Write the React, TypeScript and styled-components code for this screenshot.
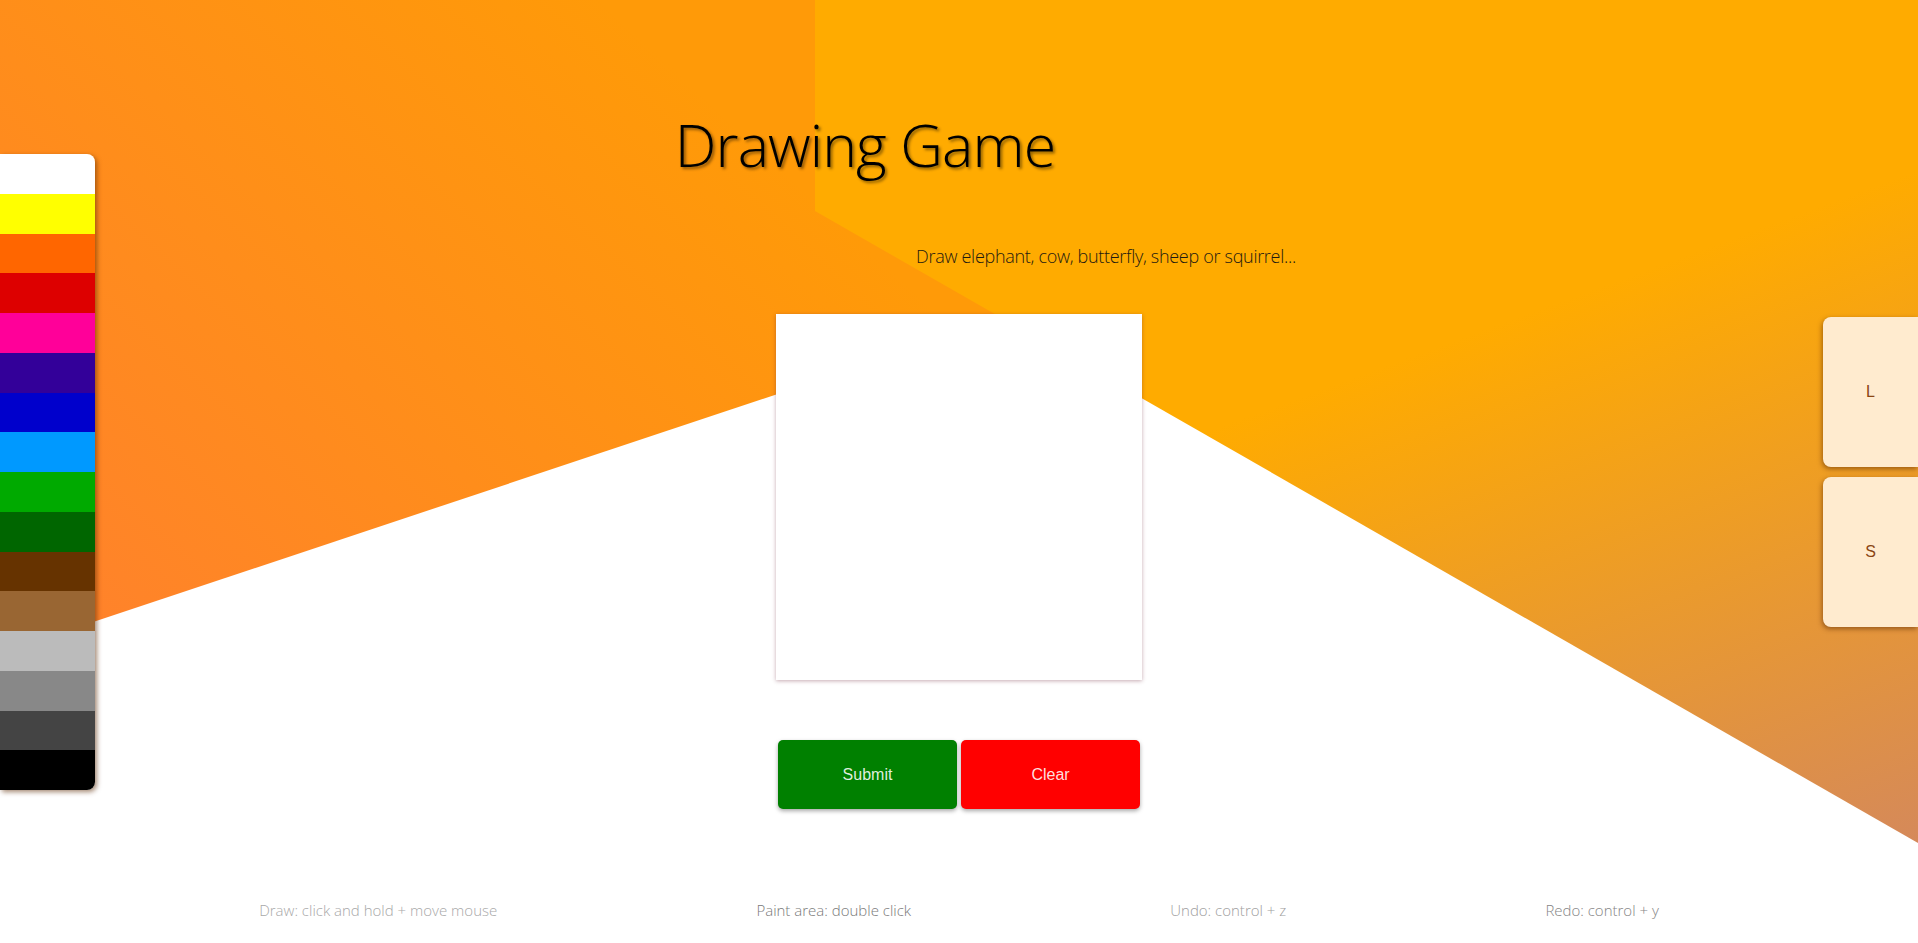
import React from "react";
import styled, { createGlobalStyle } from "styled-components";

const Global = createGlobalStyle`
  html, body { margin: 0; padding: 0; background: #ffffff; }
  body { font-family: "Open Sans", "Noto Sans", sans-serif; overflow: hidden; }
  * { box-sizing: border-box; }
`;

const Page = styled.div`
  position: relative;
  width: 100%;
  height: 943px;
  overflow: hidden;
  display: flex;
  flex-direction: column;
`;

const Backdrop = styled.svg`
  position: absolute;
  inset: 0;
  width: 100%;
  height: 100%;
  z-index: 0;
`;

const Main = styled.div`
  position: relative;
  z-index: 1;
  display: grid;
  grid-template-columns: 95px 1fr 95px;
  align-items: start;
`;

const Palette = styled.ul`
  list-style: none;
  margin: 154px 0 0 0;
  padding: 0;
  width: 95px;
  display: flex;
  flex-direction: column;
  border-radius: 0 8px 8px 0;
  overflow: hidden;
  box-shadow: 2px 2px 5px rgba(90, 40, 0, 0.55);
`;

const Swatch = styled.li<{ $color: string }>`
  height: 39.75px;
  background: ${(p) => p.$color};
  cursor: pointer;
`;

const Center = styled.div`
  display: flex;
  flex-direction: column;
  align-items: center;
  padding-top: 108px;
`;

const Title = styled.h1`
  margin: 0 188px 0 0;
  font-family: "Open Sans", "Noto Sans", sans-serif;
  font-weight: 300;
  font-size: 59px;
  letter-spacing: -0.9px;
  line-height: 72px;
  color: #000;
  text-shadow: 2px 2px 3px rgba(0, 0, 0, 0.45);
  white-space: nowrap;
`;

const Subtitle = styled.p`
  margin: 64px 0 0 294px;
  font-family: "Open Sans", "Noto Sans", sans-serif;
  font-weight: 300;
  font-size: 18px;
  letter-spacing: -0.3px;
  line-height: 24px;
  color: #1e1a10;
  white-space: nowrap;
`;

const Canvas = styled.div`
  margin-top: 46px;
  width: 366px;
  height: 366px;
  background: #ffffff;
  box-shadow: 0 1px 4px rgba(110, 40, 60, 0.4);
`;

const ButtonRow = styled.div`
  margin-top: 60px;
  display: flex;
  gap: 4px;
`;

const ActionButton = styled.button<{ $bg: string }>`
  width: 179px;
  height: 69px;
  border: none;
  border-radius: 5px;
  background: ${(p) => p.$bg};
  color: rgba(255, 255, 255, 0.88);
  font-family: "Liberation Sans", Arial, sans-serif;
  font-size: 16px;
  box-shadow: 0 2px 4px rgba(0, 0, 0, 0.35);
  cursor: pointer;
`;

const SideColumn = styled.div`
  margin-top: 317px;
  display: flex;
  flex-direction: column;
  gap: 10px;
`;

const SideButton = styled.button`
  width: 95px;
  height: 150px;
  border: none;
  border-radius: 8px 0 0 8px;
  background: #ffebcf;
  color: #8b4513;
  font-family: "Liberation Sans", Arial, sans-serif;
  font-size: 16px;
  box-shadow: -1px 2px 5px rgba(90, 40, 0, 0.55);
  cursor: pointer;
`;

const Footer = styled.footer`
  position: relative;
  z-index: 1;
  margin-top: 90px;
  display: flex;
  justify-content: space-evenly;
`;

const Hint = styled.span<{ $tone: string }>`
  font-family: "Open Sans", "Noto Sans", sans-serif;
  font-weight: 300;
  font-size: 15px;
  line-height: 22px;
  color: ${(p) => p.$tone};
  white-space: nowrap;
`;

const colors = [
  "#ffffff", "#ffff00", "#ff6600", "#dd0000", "#ff0099", "#330099",
  "#0000cc", "#0099ff", "#00aa00", "#006600", "#663300", "#996633",
  "#bbbbbb", "#888888", "#444444", "#000000",
];

const hints: { text: string; tone: string }[] = [
  { text: "Draw: click and hold + move mouse", tone: "#a8a8a8" },
  { text: "Paint area: double click", tone: "#7a7a7a" },
  { text: "Undo: control + z", tone: "#a0a0a0" },
  { text: "Redo: control + y", tone: "#858585" },
];

export default function App() {
  return (
    <>
      <Global />
      <Page>
        <Backdrop viewBox="0 0 1918 943" preserveAspectRatio="none" aria-hidden>
          <defs>
            <linearGradient id="leftFill" gradientUnits="userSpaceOnUse" x1="600" y1="0" x2="0" y2="650">
              <stop offset="0" stopColor="#ff9a08" />
              <stop offset="1" stopColor="#ff802e" />
            </linearGradient>
            <linearGradient id="rightFill" gradientUnits="userSpaceOnUse" x1="1700" y1="250" x2="1918" y2="843">
              <stop offset="0" stopColor="#ffab00" />
              <stop offset="1" stopColor="#d5895a" />
            </linearGradient>
          </defs>
          <polygon points="0,0 1100,0 1003,319 0,653" fill="url(#leftFill)" />
          <polygon points="815,0 1918,0 1918,843 815,211" fill="url(#rightFill)" />
        </Backdrop>
        <Main>
          <Palette>
            {colors.map((c) => (
              <Swatch key={c} $color={c} />
            ))}
          </Palette>
          <Center>
            <Title>Drawing Game</Title>
            <Subtitle>Draw elephant, cow, butterfly, sheep or squirrel...</Subtitle>
            <Canvas />
            <ButtonRow>
              <ActionButton $bg="#008000">Submit</ActionButton>
              <ActionButton $bg="#ff0000">Clear</ActionButton>
            </ButtonRow>
          </Center>
          <SideColumn>
            <SideButton>L</SideButton>
            <SideButton>S</SideButton>
          </SideColumn>
        </Main>
        <Footer>
          {hints.map((h) => (
            <Hint key={h.text} $tone={h.tone}>
              {h.text}
            </Hint>
          ))}
        </Footer>
      </Page>
    </>
  );
}
